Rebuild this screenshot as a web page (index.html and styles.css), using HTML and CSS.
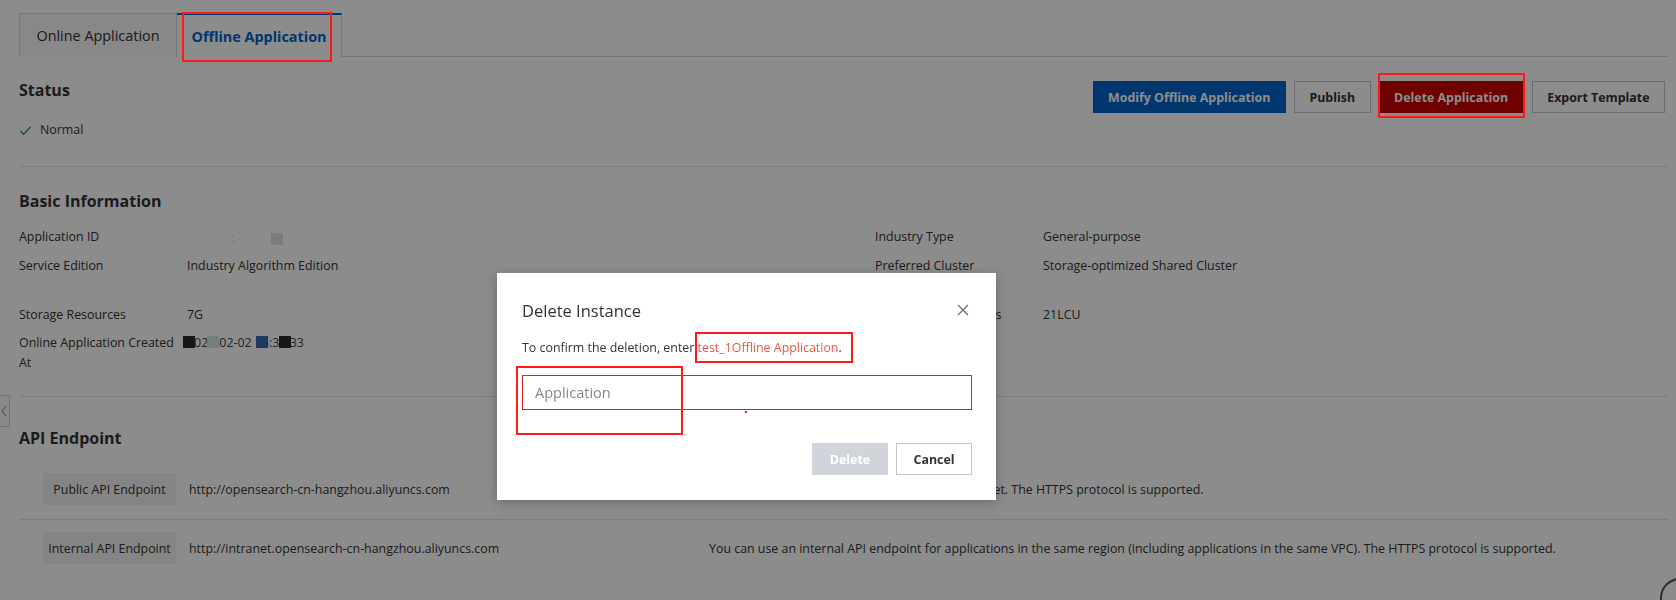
FILE: index.html
```html
<!DOCTYPE html>
<html>
<head>
<meta charset="utf-8">
<link rel="stylesheet" href="styles.css">
</head>
<body>
<div class="page">
  <div class="tabs">
    <div class="tab">Online Application</div>
    <div class="tab active">Offline Application<span class="mark mark-tab"></span></div>
  </div>

  <section class="status">
    <div class="status-left">
      <h2 class="h">Status</h2>
      <div class="state"><svg class="check" viewBox="0 0 14 14" width="13" height="13"><path d="M1.5 7.5 L5 11 L12.5 3" fill="none" stroke="#22a04b" stroke-width="1.4"/></svg>Normal</div>
    </div>
    <div class="actions">
      <button class="btn primary">Modify Offline Application</button>
      <button class="btn">Publish</button>
      <button class="btn danger">Delete Application<span class="mark mark-btn"></span></button>
      <button class="btn">Export Template</button>
    </div>
  </section>

  <section class="basic">
    <h2 class="h">Basic Information</h2>
    <div class="grid">
      <div class="lbl">Application ID</div>
      <div class="val"><span class="blur">· ·· · ·:-¦- · ··</span><span class="gsq"></span></div>
      <div class="lbl">Industry Type</div>
      <div class="val">General-purpose</div>

      <div class="lbl">Service Edition</div>
      <div class="val">Industry Algorithm Edition</div>
      <div class="lbl">Preferred Cluster</div>
      <div class="val">Storage-optimized Shared Cluster</div>

      <div class="gap"></div>

      <div class="lbl">Storage Resources</div>
      <div class="val">7G</div>
      <div class="lbl">Computing Resources</div>
      <div class="val">21LCU</div>

      <div class="lbl">Online Application Created At</div>
      <div class="val time"><span class="faint">2023-02-02 15:38:33</span><span class="sq s1"></span><span class="sq s2"></span><span class="sq s3"></span><span class="sq s4"></span></div>
      <div class="lbl"></div>
      <div class="val"></div>
    </div>
  </section>

  <section class="api">
    <h2 class="h">API Endpoint</h2>
    <div class="ep">
      <div class="ep-tag">Public API Endpoint</div>
      <div class="ep-url">http://opensearch-cn-hangzhou.aliyuncs.com</div>
      <div class="ep-desc">You can use a public API endpoint over the Internet. The HTTPS protocol is supported.</div>
    </div>
    <div class="ep">
      <div class="ep-tag">Internal API Endpoint</div>
      <div class="ep-url">http://intranet.opensearch-cn-hangzhou.aliyuncs.com</div>
      <div class="ep-desc">You can use an internal API endpoint for applications in the same region (including applications in the same VPC). The HTTPS protocol is supported.</div>
    </div>
  </section>
</div>

<div class="side-tab"><svg viewBox="0 0 10 16" width="9" height="14"><path d="M7 2 L2 8 L7 14" fill="none" stroke="#888" stroke-width="1.2"/></svg></div>
<div class="help-fab"></div>

<div class="mask"></div>

<div class="dialog">
  <div class="dlg-head">
    <div class="dlg-title">Delete Instance</div>
    <svg class="close" viewBox="0 0 12 12" width="12" height="12"><path d="M1 1 L11 11 M11 1 L1 11" stroke="#666" stroke-width="1.1"/></svg>
  </div>
  <p class="dlg-text">To confirm the deletion, enter <span class="hl">test_1Offline Application<span class="mark mark-hl"></span></span>.</p>
  <div class="field">
    <input class="inp" placeholder="Application">
    <span class="mark mark-inp"></span>
    <span class="dot"></span>
  </div>
  <div class="dlg-foot">
    <button class="dbtn disabled">Delete</button>
    <button class="dbtn">Cancel</button>
  </div>
</div>
</body>
</html>
```

FILE: styles.css
```css
* { box-sizing: border-box; }
html, body { margin: 0; height: 100%; }
body {
  font-family: "Open Sans", "Liberation Sans", sans-serif;
  font-size: 12.4px;
  color: #333;
  background: #fff;
  overflow: hidden;
  position: relative;
}
.page { padding: 13px 8px 0 19px; }

.tabs {
  display: flex;
  height: 44px;
  border-bottom: 1px solid #d9d9d9;
}
.tab {
  position: relative;
  width: 158px;
  height: 44px;
  border: 1px solid #d9d9d9;
  border-bottom: none;
  background: #f7f7f7;
  font-size: 14.4px;
  color: #333;
  display: flex;
  align-items: center;
  justify-content: center;
}
.tab.active {
  width: 165px;
  background: #fff;
  border-top: 2px solid #0064c8;
  border-left: none;
  height: 45px;
  margin-bottom: -1px;
  color: #0064c8;
  font-weight: 700;
  padding-bottom: 1px;
}

.mark { position: absolute; border: 2px solid #ff1a1a; z-index: 30; pointer-events: none; }
.mark-tab { left: 5px; top: -3px; width: 150px; height: 50px; }
.mark-btn { left: -2px; top: -9px; right: -2px; bottom: -6px; }
.mark-hl { left: -3px; top: -7px; width: 158px; height: 31px; }
.mark-inp { left: -6px; top: -9px; width: 167px; height: 69px; }

.h { margin: 0; font-size: 16px; font-weight: 700; color: #333; line-height: 22px; }

.status {
  display: flex;
  justify-content: space-between;
  padding-top: 22px;
  height: 110px;
  border-bottom: 1px solid #e3e3e3;
}
.state { display: flex; align-items: center; gap: 8px; margin-top: 20px; }
.check { margin-top: 1px; }
.actions { display: flex; gap: 8px; padding-top: 2px; margin-right: 3px; }
.btn {
  position: relative;
  height: 32px;
  padding: 0 14.5px;
  border: 1px solid #c4c6cc;
  background: #fff;
  font-family: inherit;
  font-size: 12.4px;
  font-weight: 700;
  color: #333;
}
.btn.primary { background: #0064c8; border-color: #0064c8; color: #fff; }
.btn.danger { background: #c80000; border-color: #c80000; color: #fff; }

.basic { padding-top: 23px; height: 230px; border-bottom: 1px solid #e3e3e3; }
.grid {
  display: grid;
  grid-template-columns: 168px 688px 168px 1fr;
  row-gap: 8px;
  margin-top: 15px;
  line-height: 20px;
}
.gap { grid-column: 1 / -1; height: 13px; }
.lbl, .val { color: #333; }
.val { position: relative; }
.blur { color: #d9d9d9; font-size: 9px; letter-spacing: 2px; }
.gsq { display: inline-block; width: 12px; height: 12px; background: #e0e0e0; margin-left: 6px; vertical-align: -4px; }
.faint { color: #444; }
.sq { position: absolute; top: 3px; width: 12px; height: 12px; }
.s1 { left: -4px; background: #2a2a2a; }
.s2 { left: 20px; background: #cfe8e8; }
.s3 { left: 69px; background: #3b6cad; }
.s4 { left: 92px; background: #2a2a2a; }

.api { padding-top: 30px; }
.ep {
  display: grid;
  grid-template-columns: 133px 507px 1fr;
  column-gap: 13px;
  align-items: center;
  padding: 12px 0 14px 24px;
}
.api .ep:first-of-type { margin-top: 24px; padding-top: 0; }
.ep + .ep { border-top: 1px solid #e3e3e3; padding-top: 12px; }
.ep-tag {
  height: 32px;
  background: #f2f2f2;
  display: flex;
  align-items: center;
  justify-content: center;
  white-space: nowrap;
  color: #333;
}
.ep-url, .ep-desc { color: #333; white-space: nowrap; }

.side-tab {
  position: absolute;
  left: -1px; top: 395px;
  width: 11px; height: 32px;
  border: 1px solid #ccc;
  background: #fafafa;
  display: flex; align-items: center; justify-content: center;
}
.help-fab {
  position: absolute;
  left: 1660px; top: 578px;
  width: 40px; height: 40px;
  border-radius: 50%;
  border: 2px solid #555;
  background: #fff;
}

.mask { position: fixed; inset: 0; background: rgba(0,0,0,0.45); z-index: 10; }

.dialog {
  position: absolute;
  left: 497px; top: 273px;
  width: 499px; height: 227px;
  background: #fff;
  box-shadow: 0 2px 10px rgba(0,0,0,0.25);
  z-index: 20;
  padding: 0 24px 0 25px;
}
.dlg-head { display: flex; justify-content: space-between; align-items: center; height: 34px; margin-top: 20px; }
.dlg-title { font-size: 16.5px; color: #333; }
.close { margin-right: 3px; }
.dlg-text { margin: 11px 0 0; line-height: 20px; color: #333; }
.hl { position: relative; color: #f0553a; }
.field { position: relative; margin-top: 17px; height: 35px; }
.inp {
  width: 100%; height: 35px;
  border: 1px solid #e02020;
  padding: 0 12px;
  font-family: inherit;
  font-size: 14.5px;
  color: #333;
  outline: none;
}
.inp::placeholder { color: #888; }
.dot { position: absolute; left: 223px; top: 36px; width: 2px; height: 2px; background: #e02020; }
.dlg-foot { display: flex; justify-content: flex-end; gap: 8px; margin-top: 33px; }
.dbtn {
  width: 76px; height: 32px;
  border: 1px solid #c4c6cc;
  background: #fff;
  font-family: inherit;
  font-size: 12.4px;
  font-weight: 700;
  color: #333;
}
.dbtn.disabled { background: #d1d4da; border-color: #d1d4da; color: #fff; }
```
